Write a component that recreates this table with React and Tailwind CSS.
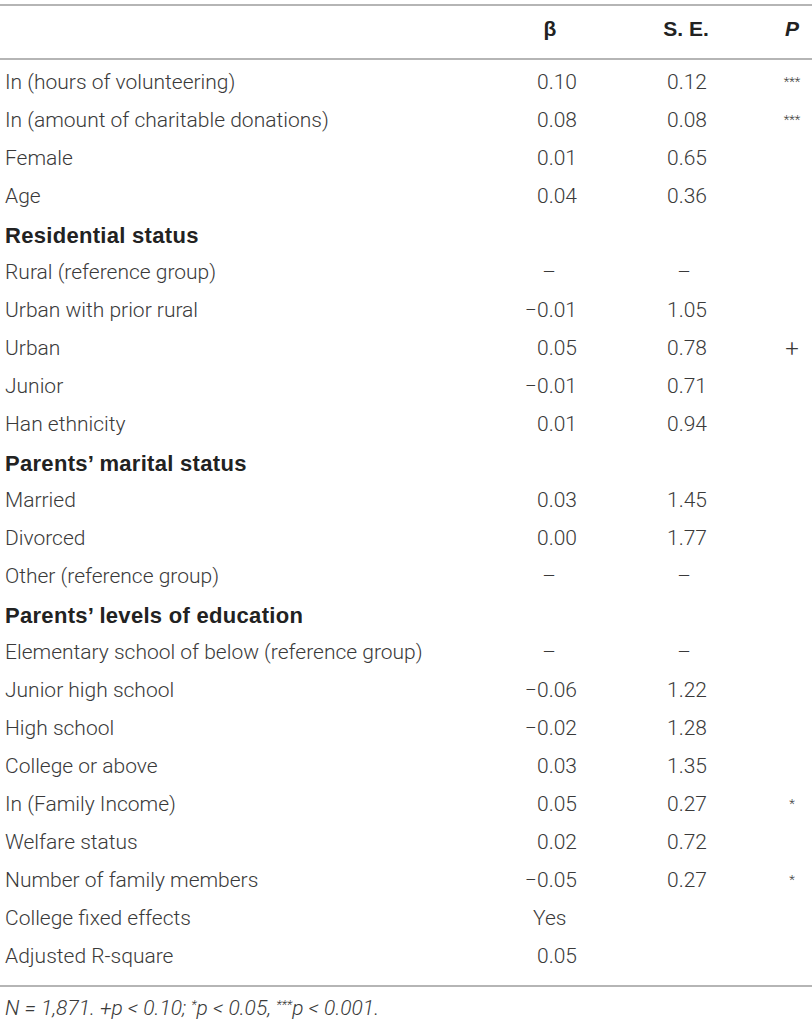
import React from 'react';

// rows: [label, beta, se, p, kind]
const rows = [
  ['In (hours of volunteering)', '0.10', '0.12', '***'],
  ['In (amount of charitable donations)', '0.08', '0.08', '***'],
  ['Female', '0.01', '0.65', ''],
  ['Age', '0.04', '0.36', ''],
  ['Residential status', null, null, null, 'head'],
  ['Rural (reference group)', '–', '–', ''],
  ['Urban with prior rural', '−0.01', '1.05', ''],
  ['Urban', '0.05', '0.78', '+'],
  ['Junior', '−0.01', '0.71', ''],
  ['Han ethnicity', '0.01', '0.94', ''],
  ['Parents’ marital status', null, null, null, 'head'],
  ['Married', '0.03', '1.45', ''],
  ['Divorced', '0.00', '1.77', ''],
  ['Other (reference group)', '–', '–', ''],
  ['Parents’ levels of education', null, null, null, 'head'],
  ['Elementary school of below (reference group)', '–', '–', ''],
  ['Junior high school', '−0.06', '1.22', ''],
  ['High school', '−0.02', '1.28', ''],
  ['College or above', '0.03', '1.35', ''],
  ['In (Family Income)', '0.05', '0.27', '*'],
  ['Welfare status', '0.02', '0.72', ''],
  ['Number of family members', '−0.05', '0.27', '*'],
  ['College fixed effects', 'Yes', '', ''],
  ['Adjusted R-square', '0.05', '', ''],
];

const Beta = ({ v }) => {
  if (v === '–') return <div className="w-[140px] text-center pr-[2px]">{v}</div>;
  if (v === 'Yes') return <div className="w-[140px] pl-[53px]">{v}</div>;
  return <div className="w-[140px] text-right pr-[43px]">{v}</div>;
};

const SE = ({ v }) => {
  if (v === '–') return <div className="w-[132px] text-center pr-[4px]">{v}</div>;
  return <div className="w-[132px] text-right pr-[45px]">{v}</div>;
};

const P = ({ v }) => {
  if (!v) return <div className="w-[40px]" />;
  if (v === '+') return <div className="w-[40px] text-center text-[24px] leading-none">+</div>;
  return <div className="w-[40px] text-center text-[13px] self-start pt-[8px]">{v}</div>;
};

export default function App() {
  return (
    <div className="w-[812px] h-[1024px] bg-white text-[#3a3a3a] font-['Roboto','Liberation_Sans',sans-serif] font-light text-[21px] pt-[4px]">
      <div className="border-t-2 border-[#b5b5b5]">
        <div className="flex items-end pb-[14px] h-[54px] border-b-2 border-[#b5b5b5] font-['Liberation_Sans',sans-serif] font-bold text-[#222] text-[21px]">
          <div className="flex-1" />
          <div className="w-[140px] text-center">β</div>
          <div className="w-[132px] text-center">S. E.</div>
          <div className="w-[20px]" />
          <div className="w-[40px] text-center italic">P</div>
        </div>
        <div className="pt-[4px] pb-[9px] border-b-2 border-[#b5b5b5]">
          {rows.map(([label, b, s, p, kind], i) =>
            kind === 'head' ? (
              <div key={i} className="flex items-center h-[38px] pl-[5px] font-['Liberation_Sans',sans-serif] font-bold text-[22px] tracking-[0.3px] text-[#222]">
                {label}
              </div>
            ) : (
              <div key={i} className="flex items-center h-[38px]">
                <div className="flex-1 pl-[5px] whitespace-nowrap">{label}</div>
                <Beta v={b} />
                <SE v={s} />
                <div className="w-[20px]" />
                <P v={p} />
              </div>
            )
          )}
        </div>
        <div className="pl-[5px] pt-[6px] italic">
          N = 1,871. +p &lt; 0.10; <sup className="text-[13px]">*</sup>p &lt; 0.05, <sup className="text-[13px]">***</sup>p &lt; 0.001.
        </div>
      </div>
    </div>
  );
}
